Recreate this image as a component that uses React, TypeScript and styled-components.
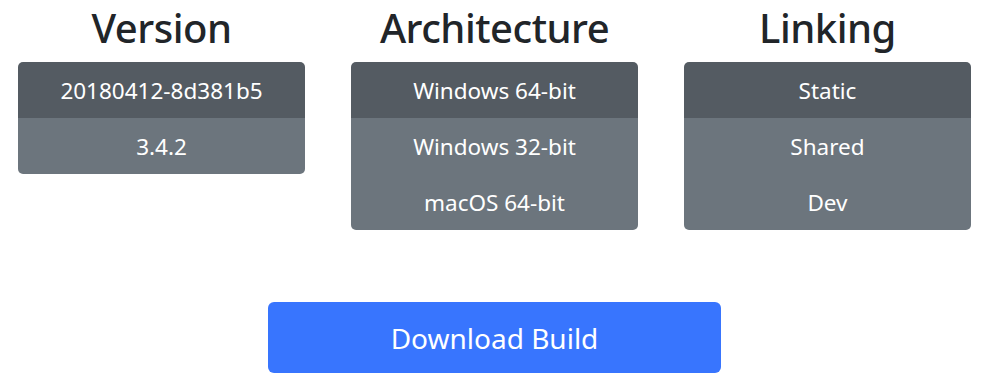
import styled, {createGlobalStyle} from "styled-components";

const GlobalStyle = createGlobalStyle`
  html, body {
    margin: 0;
    padding: 0;
    background: #fff;
  }
  body {
    font-family: "Noto Sans", "Open Sans", sans-serif;
    color: #212529;
  }
`;

const Page = styled.div`
  width: 1004px;
  height: 392px;
  padding: 0 34px 0 19px;
  box-sizing: border-box;
  display: flex;
  flex-direction: column;
  align-items: center;
`;

const Columns = styled.div`
  display: grid;
  grid-template-columns: repeat(3, 287px);
  column-gap: 46px;
  align-items: start;
`;

const Column = styled.div`
  display: flex;
  flex-direction: column;
  align-items: stretch;
`;

const Heading = styled.h1`
  margin: 0 0 6px;
  height: 56px;
  font-size: 40px;
  font-weight: 500;
  line-height: 56px;
  text-align: center;
  letter-spacing: -0.5px;
`;

const OptionGroup = styled.div`
  display: flex;
  flex-direction: column;
  border-radius: 5px;
  overflow: hidden;
`;

const Option = styled.button<{ $active?: boolean }>`
  height: 56px;
  border: none;
  padding: 0 16px;
  font-family: inherit;
  font-size: 22.5px;
  color: #fff;
  background: ${p => (p.$active ? "#545b62" : "#6c757d")};
  cursor: pointer;
`;

const DownloadButton = styled.button`
  margin-top: 72px;
  width: 453px;
  height: 71px;
  border: none;
  border-radius: 6px;
  background: #3875fe;
  color: #fff;
  font-family: inherit;
  font-size: 28px;
  cursor: pointer;
`;

const groups = [
    {title: "Version", options: ["20180412-8d381b5", "3.4.2"]},
    {title: "Architecture", options: ["Windows 64-bit", "Windows 32-bit", "macOS 64-bit"]},
    {title: "Linking", options: ["Static", "Shared", "Dev"]},
];

export default function App() {
    return (<>
        <GlobalStyle />
        <Page>
            <Columns>
                {groups.map(g => (
                    <Column key={g.title}>
                        <Heading>{g.title}</Heading>
                        <OptionGroup>
                            {g.options.map((o, i) => (
                                <Option key={o} $active={i === 0}>{o}</Option>
                            ))}
                        </OptionGroup>
                    </Column>
                ))}
            </Columns>
            <DownloadButton>Download Build</DownloadButton>
        </Page>
    </>);
}
